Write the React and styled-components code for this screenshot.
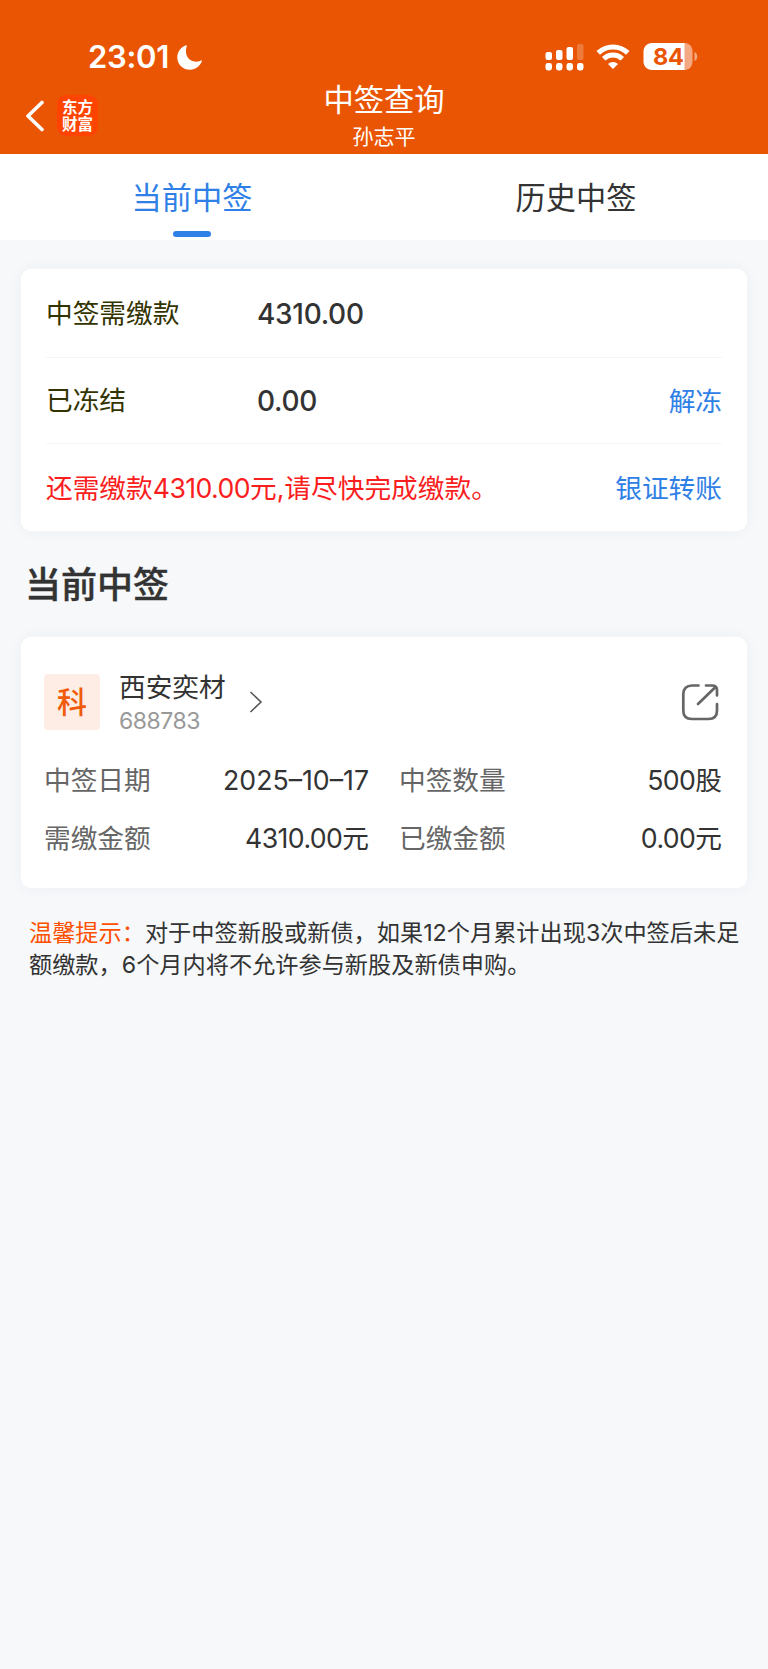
import React, { Fragment } from "react";
import styled, { createGlobalStyle } from "styled-components";

const GlobalStyle = createGlobalStyle`
  body {
    margin: 0;
    background: #f6f8fa;
    color: #333333;
    font-family: Inter, "Noto Sans CJK SC", sans-serif;
  }
`;

const Page = styled.div`
  width: 768px;
  min-height: 1669px;
  background: #f6f8fa;
`;

const Header = styled.header`
  display: flex;
  flex-direction: column;
  height: 154px;
  background: #ea5504;
  color: #ffffff;
`;

const StatusBar = styled.div`
  display: flex;
  justify-content: space-between;
  align-items: center;
  height: 34px;
  padding: 40px 71px 0 88px;
`;

const StatusGroup = styled.div`
  display: flex;
  align-items: center;
`;

const Clock = styled.span`
  font-size: 31px;
  font-weight: 600;
  line-height: 34px;
  letter-spacing: -0.3px;
  margin-right: 8px;
`;

const BatteryLevel = styled.text`
  font-family: Inter, sans-serif;
  font-size: 23.5px;
  font-weight: 700;
  fill: #ea5504;
`;

const NavBar = styled.nav`
  display: grid;
  grid-template-columns: 200px 1fr 200px;
  height: 80px;
`;

const NavLeft = styled.div`
  display: flex;
  align-items: center;
  gap: 12px;
  padding: 3px 0 0 25px;
`;

const Logo = styled.div`
  display: flex;
  flex-direction: column;
  justify-content: center;
  align-items: center;
  box-sizing: border-box;
  width: 41px;
  height: 41px;
  border-radius: 9px;
  background: #ff4400;
  font-size: 15.5px;
  font-weight: 700;
  line-height: 17px;
`;

const NavTitle = styled.div`
  display: flex;
  flex-direction: column;
  align-items: center;
`;

const Title = styled.h1`
  margin: 6px 0 0;
  font-size: 30.3px;
  font-weight: 400;
  line-height: 40px;
`;

const Account = styled.span`
  margin-top: 4px;
  font-size: 21px;
  line-height: 26px;
`;

const Tabs = styled.div`
  display: grid;
  grid-template-columns: 1fr 1fr;
  height: 86px;
  background: #ffffff;
`;

const Tab = styled.div`
  display: flex;
  flex-direction: column;
  align-items: center;
  padding-top: 22px;
  font-size: 30.2px;
  line-height: 44px;
  color: ${props => (props.$active ? "#2f80e6" : "#333333")};

  &::after {
    content: "";
    width: 38px;
    height: 6px;
    margin-top: 10.5px;
    border-radius: 3px;
    background: ${props => (props.$active ? "#2f80e6" : "transparent")};
  }
`;

const Card = styled.section`
  margin: 0 21px;
  border-radius: 10px;
  background: #ffffff;
  box-shadow: 0 0 14px rgba(60, 80, 110, 0.05);
`;

const SummaryCard = styled(Card)`
  box-sizing: border-box;
  height: 262px;
  margin-top: 29px;
  padding: 0 25px;
`;

const SummaryRow = styled.div`
  display: flex;
  align-items: center;
  box-sizing: border-box;
  height: ${props => props.$height}px;
  font-size: 26.7px;
  border-bottom: ${props => (props.$last ? "none" : "1px solid #f5f5f7")};
`;

const SummaryLabel = styled.span`
  width: 211px;
  padding-bottom: 4px;
  color: #333300;
`;

const Amount = styled.span`
  flex: 1;
  padding-top: 1px;
  font-size: 28px;
  font-weight: 500;
  letter-spacing: -0.3px;
`;

const Warning = styled.span`
  flex: 1;
  padding-bottom: 3px;
  color: #fa1e1e;
  white-space: nowrap;
`;

const Action = styled.a`
  padding-bottom: 3px;
  color: #2f80e6;
`;

const Digits = styled.span`
  letter-spacing: -0.6px;
`;

const SectionTitle = styled.h2`
  margin: 29px 25px 0;
  font-size: 36px;
  font-weight: 500;
  line-height: 50px;
  -webkit-text-stroke: 0.4px;
`;

const StockCard = styled(Card)`
  box-sizing: border-box;
  height: 251px;
  margin-top: 27px;
  padding: 32px 25px 0 23px;
`;

const StockHeader = styled.div`
  display: flex;
  align-items: center;
  height: 66px;
`;

const Badge = styled.div`
  width: 56px;
  height: 56px;
  margin-right: 19px;
  border-radius: 4px;
  background: #fdede4;
  color: #f05a0a;
  font-size: 30px;
  font-weight: 500;
  line-height: 56px;
  text-align: center;
`;

const StockName = styled.div`
  font-size: 26.7px;
  line-height: 36px;
`;

const StockCode = styled.div`
  padding-top: 3px;
  font-size: 23px;
  line-height: 27px;
  letter-spacing: -0.5px;
  color: #999999;
`;

const Chevron = styled.svg`
  margin-left: 23px;
  margin-right: auto;
`;

const ShareButton = styled.span`
  display: flex;
  margin-right: 3px;
`;

const DetailGrid = styled.dl`
  display: grid;
  grid-template-columns: 140px 185px 140px 1fr;
  grid-auto-rows: 58px;
  align-items: baseline;
  margin: 16px 0 0;
  font-size: 26.7px;
  line-height: 58px;
`;

const Term = styled.dt`
  padding-left: ${props => (props.$indent ? "30px" : "0")};
  color: #666666;
  white-space: nowrap;
`;

const Value = styled.dd`
  margin: 0;
  text-align: right;
  white-space: nowrap;
`;

const Tip = styled.p`
  margin: 29px 0 0 29px;
  font-size: 23.2px;
  line-height: 32px;
  white-space: nowrap;
`;

const TipLabel = styled.span`
  color: #ff5000;
`;

const Moon = () => (
  <svg width="25" height="25" viewBox="0 0 25 25">
    <path
      d="M9.2 0.3C9.6 0.1 10 0.4 9.8 0.9C7.6 7.4 9.6 13.2 14.2 15.6C17.3 17.2 20.7 17 24.2 15.4C24.7 15.2 25.1 15.6 24.9 16.1C23 21.4 18.6 24.7 13.1 24.7C6 24.7 0.3 19.5 0.3 12.4C0.3 6.8 4.1 2 9.2 0.3Z"
      fill="#fff"
    />
  </svg>
);

const Signal = () => (
  <svg width="39" height="28" viewBox="0 0 39 28" fill="#fff">
    <rect x="0.5" y="9" width="6.5" height="8" rx="2" />
    <rect x="11" y="7" width="6.5" height="10" rx="2" />
    <rect x="21.5" y="4" width="6.5" height="13" rx="2" />
    <rect x="32" y="1" width="6.5" height="16" rx="2" opacity="0.22" />
    {[0.5, 11, 21.5, 32].map(x => (
      <rect key={x} x={x} y="20" width="6.5" height="7.5" rx="2.4" />
    ))}
  </svg>
);

const WifiIcon = styled.svg`
  margin-left: 12px;
`;

const Wifi = () => (
  <WifiIcon width="34" height="26" viewBox="0 0 34 26" fill="none" stroke="#fff">
    <path d="M2.2 8.9C10.5 0.9 23.5 0.9 31.8 8.9" strokeWidth="5" />
    <path d="M7.7 14.8C13 9.8 21 9.8 26.3 14.8" strokeWidth="5" />
    <path
      d="M17 25L12 20C14.8 17.3 19.2 17.3 22 20Z"
      fill="#fff"
      stroke="none"
    />
  </WifiIcon>
);

const BatteryIcon = styled.svg`
  margin-left: 13px;
  margin-right: -1px;
  margin-bottom: 1px;
`;

const Battery = () => (
  <BatteryIcon width="55" height="27" viewBox="0 0 55 27">
    <path
      d="M42 0C46.4 0 49.5 3.8 49.5 8.5V18.5C49.5 23.2 46.4 27 42 27H41V0Z"
      fill="#f4a881"
    />
    <path
      d="M41.5 0H9C4 0 0.5 3.8 0.5 8.5V18.5C0.5 23.2 4 27 9 27H41.5Z"
      fill="#fff"
    />
    <path d="M51.5 9C55.2 10.2 55.2 16.8 51.5 18Z" fill="#f4a881" />
    <BatteryLevel x="10" y="22" textLength="31">
      84
    </BatteryLevel>
  </BatteryIcon>
);

const BackArrow = () => (
  <svg width="20" height="32" viewBox="0 0 20 32">
    <path
      d="M17 2.5L3 16L17 29.5"
      fill="none"
      stroke="#fff"
      strokeWidth="3.6"
      strokeLinecap="round"
      strokeLinejoin="round"
    />
  </svg>
);

const ShareIcon = () => (
  <svg
    width="38"
    height="38"
    viewBox="0 0 38 38"
    fill="none"
    stroke="#666"
    strokeWidth="2.7"
    strokeLinecap="round"
    strokeLinejoin="round"
  >
    <path d="M17.5 2.5H11C5.5 2.5 2.3 5.5 2.3 11V27.5C2.3 33 5.5 36 11 36H27.5C33 36 36 33 36 27.5V21" />
    <path d="M25 2.5H31C34.5 2.5 36 3.7 36 7V12.5M34 4.5L17 21" />
  </svg>
);

const details = [
  ["中签日期", "2025–10–17", "中签数量", <><Digits>500</Digits>股</>],
  [
    "需缴金额",
    <><Digits>4310.00</Digits>元</>,
    "已缴金额",
    <><Digits>0.00</Digits>元</>
  ]
];

const App = () => (
  <Page>
    <GlobalStyle />
    <Header>
      <StatusBar>
        <StatusGroup>
          <Clock>23:01</Clock>
          <Moon />
        </StatusGroup>
        <StatusGroup>
          <Signal />
          <Wifi />
          <Battery />
        </StatusGroup>
      </StatusBar>
      <NavBar>
        <NavLeft>
          <BackArrow />
          <Logo>
            <span>东方</span>
            <span>财富</span>
          </Logo>
        </NavLeft>
        <NavTitle>
          <Title>中签查询</Title>
          <Account>孙志平</Account>
        </NavTitle>
      </NavBar>
    </Header>

    <Tabs>
      <Tab $active>当前中签</Tab>
      <Tab>历史中签</Tab>
    </Tabs>

    <SummaryCard>
      <SummaryRow $height={89}>
        <SummaryLabel>中签需缴款</SummaryLabel>
        <Amount>4310.00</Amount>
      </SummaryRow>
      <SummaryRow $height={86}>
        <SummaryLabel>已冻结</SummaryLabel>
        <Amount>0.00</Amount>
        <Action>解冻</Action>
      </SummaryRow>
      <SummaryRow $height={87} $last>
        <Warning>
          还需缴款<Digits>4310.00</Digits>元,请尽快完成缴款。
        </Warning>
        <Action>银证转账</Action>
      </SummaryRow>
    </SummaryCard>

    <SectionTitle>当前中签</SectionTitle>

    <StockCard>
      <StockHeader>
        <Badge>科</Badge>
        <div>
          <StockName>西安奕材</StockName>
          <StockCode>688783</StockCode>
        </div>
        <Chevron width="14" height="24" viewBox="0 0 14 24">
          <path d="M1.5 2L12 12L1.5 22" fill="none" stroke="#555" strokeWidth="1.6" />
        </Chevron>
        <ShareButton>
          <ShareIcon />
        </ShareButton>
      </StockHeader>
      <DetailGrid>
        {details.map(([label, value, otherLabel, otherValue]) => (
          <Fragment key={label}>
            <Term>{label}</Term>
            <Value>{value}</Value>
            <Term $indent>{otherLabel}</Term>
            <Value>{otherValue}</Value>
          </Fragment>
        ))}
      </DetailGrid>
    </StockCard>

    <Tip>
      <TipLabel>温馨提示：</TipLabel>
      对于中签新股或新债，如果12个月累计出现3次中签后未足
      <br />
      额缴款，6个月内将不允许参与新股及新债申购。
    </Tip>
  </Page>
);

export default App;
